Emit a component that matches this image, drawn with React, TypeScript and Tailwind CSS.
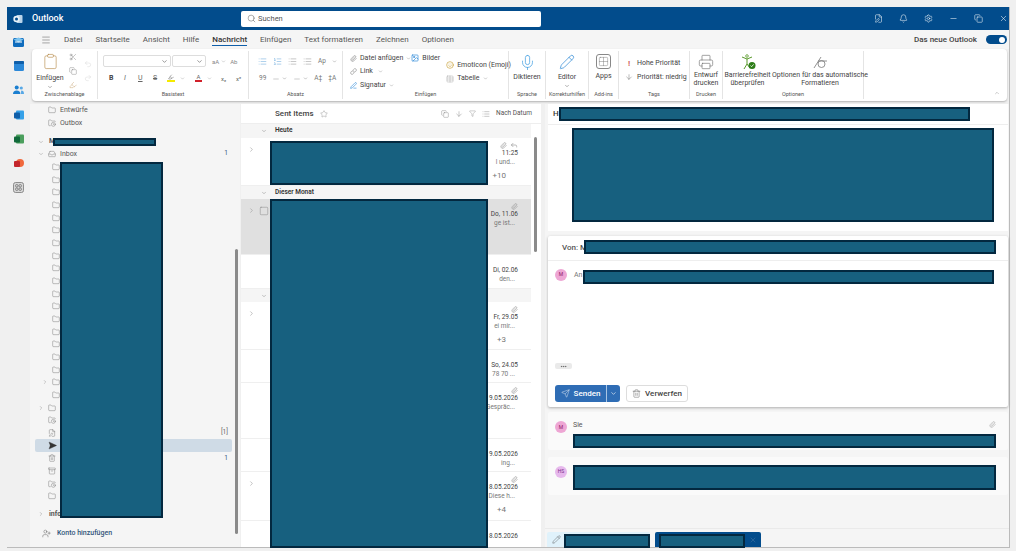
import {
  Archive,
  ArrowDown,
  Bell,
  ChevronDown,
  ChevronRight,
  ChevronUp,
  Clipboard,
  Copy,
  Ellipsis,
  FileEdit,
  Filter,
  Folder,
  FolderClock,
  Grid2x2,
  Highlighter,
  Image,
  Inbox,
  Link,
  List,
  ListOrdered,
  Menu,
  Mic,
  Minus,
  Paperclip,
  PenLine,
  Pencil,
  Printer,
  Redo2,
  Reply,
  Scissors,
  Search,
  Send,
  SendHorizontal,
  Settings,
  Smile,
  Square,
  Star,
  Table,
  Trash2,
  Undo2,
  UserPlus,
  X,
} from "lucide-react";
import type { ReactNode } from "react";

const tabs = ["Datei", "Startseite", "Ansicht", "Hilfe", "Nachricht", "Einfügen", "Text formatieren", "Zeichnen", "Optionen"];

function Redact({ x, y, w, h }: { x: number; y: number; w: number; h: number }) {
  // Schwaerzungen liegen ueber dem Inhalt, daher absolut
  return (
    <div
      className="absolute z-20 bg-[#17607f] border-2 border-[#03283f]"
      style={{ left: x, top: y, width: w, height: h }}
    />
  );
}

function Group({ label, w, children }: { label: string; w: number; children: ReactNode }) {
  return (
    <div className="flex flex-col shrink-0 border-r border-[#e4e4e4] h-[48px] my-auto" style={{ width: w }}>
      <div className="flex-1 min-h-0">{children}</div>
      <div className="h-[9px] leading-[9px] text-center text-[5.5px] text-[#555]">{label}</div>
    </div>
  );
}

const folderIcon = "ml-[3px] text-[#666] shrink-0";

function FolderRow({ sub, chevron, icon, active, count, label, bold }: { sub?: boolean; chevron?: boolean; icon?: ReactNode; active?: boolean; count?: string; label?: string; bold?: boolean }) {
  return (
    <div className={`relative flex items-center h-[12.68px] rounded-[2px] ${active ? "bg-[#cfdbe6]" : ""} ${sub ? "pl-[6px]" : "pl-[2px]"}`}>
      <span className="w-[8px] flex justify-center text-[#999]">{chevron && <ChevronRight size={6} />}</span>
      {icon}
      {label && <span className={`ml-[4px] whitespace-nowrap text-[7px] ${bold ? "font-bold text-[#555]" : "text-[#555]"}`}>{label}</span>}
      {count && <span className={`absolute right-[4px] text-[6.5px] ${count === "1" ? "text-[#33557a]" : "text-[#666]"}`}>{count}</span>}
    </div>
  );
}

type Mail = { h: number; date?: string; snip?: string; clip?: boolean; reply?: boolean; more?: string; selected?: boolean; arrow?: boolean };

function MailRow({ m }: { m: Mail }) {
  return (
    <div className={`relative shrink-0 mr-[10px] border-b border-[#efefef] ${m.selected ? "bg-[#e0e0e0]" : "bg-white"}`} style={{ height: m.h }}>
      {m.arrow && <ChevronRight size={7} className="absolute left-[7px] top-[8px] text-[#999]" />}
      {m.selected && <Square size={10} strokeWidth={1} className="absolute left-[18px] top-[7px] text-[#777]" />}
      <div className="ml-auto w-[44px] pr-[13px] pt-[3px] flex flex-col items-end text-[6.5px] leading-[9px] text-[#444]">
        <div className="h-[8px] flex items-center gap-[3px] text-[#999]">
          {m.clip && <Paperclip size={7} />}
          {m.reply && <Reply size={8} />}
        </div>
        <span className="whitespace-nowrap">{m.date}</span>
        <span className="whitespace-nowrap text-[#777] mr-[3px]">{m.snip}</span>
        {m.more && <span className="mt-[4px] mr-[12px] text-[8px] text-[#777]">{m.more}</span>}
      </div>
    </div>
  );
}

function GroupHead({ label, h }: { label?: string; h: number }) {
  return (
    <div className="shrink-0 flex items-center pl-[20px] mr-[10px] bg-[#f5f5f5] text-[6.5px] font-semibold text-[#333]" style={{ height: h }}>
      <ChevronDown size={6} className="text-[#888] mr-[8px]" />
      {label}
    </div>
  );
}

function AppIcon({ children }: { children: ReactNode }) {
  return <div className="h-[24.2px] flex items-center justify-center">{children}</div>;
}

export default function App() {
  return (
    <div className="relative w-[1016px] h-[551px] overflow-hidden bg-[#f0f0f0] pl-[7px] pr-[6px] pt-[7px] pb-[3px] font-['Roboto',sans-serif] text-[#333]">
      <div className="h-full flex flex-col border-r border-b border-[#bbb] bg-[#f0f0f0]">
        {/* TITELLEISTE */}
        <div className="relative shrink-0 h-[23px] bg-[#024c8c] text-white flex items-center">
          <svg width="10" height="10" viewBox="0 0 10 10" className="ml-[6px]">
            <rect x="3.5" y="1" width="6" height="8" rx="1" fill="#b9d4ea" />
            <circle cx="3.5" cy="5" r="3.2" fill="#e8f1f8" />
            <circle cx="3.5" cy="5" r="1.5" fill="#024c8c" />
          </svg>
          <span className="ml-[9px] w-[209px] text-[9px] font-medium">Outlook</span>
          <div className="w-[300px] h-[16px] bg-white rounded-[2px] flex items-center pl-[6px] text-[#555] text-[7.5px]">
            <Search size={9} strokeWidth={1.3} className="mr-[2px]" />
            Suchen
          </div>
          <div className="ml-auto flex items-center gap-[16px] pr-[1px]">
            <FileEdit size={9} strokeWidth={1.4} />
            <Bell size={9} strokeWidth={1.4} />
            <Settings size={9} strokeWidth={1.4} />
            <Minus size={9} strokeWidth={1.4} />
            <Copy size={9} strokeWidth={1.4} />
            <X size={9} strokeWidth={1.4} />
          </div>
        </div>

        <div className="flex-1 min-h-0 flex">
          {/* APP-LEISTE */}
          <div className="w-[23px] shrink-0 bg-[#f0f0f0]">
            <div>
              <AppIcon>
                <svg width="11" height="10" viewBox="0 0 11 10">
                  <rect y="1" width="11" height="9" rx="1.5" fill="#0f6cbd" />
                  <path d="M0.5 2.5 L5.5 5.5 L10.5 2.5 L5.5 0.5 Z" fill="#7cc4f0" />
                  <path d="M2 5 H9" stroke="#fff" strokeWidth="1" />
                </svg>
              </AppIcon>
              <AppIcon>
                <svg width="10" height="10" viewBox="0 0 10 10">
                  <rect width="10" height="10" rx="1.5" fill="#2b88d8" />
                  <rect width="10" height="3" rx="1" fill="#0f5ea8" />
                </svg>
              </AppIcon>
              <AppIcon>
                <svg width="11" height="10" viewBox="0 0 11 10">
                  <circle cx="3.7" cy="2.6" r="2" fill="#1b7fd0" />
                  <circle cx="8.3" cy="3" r="1.6" fill="#58a8e6" />
                  <path d="M0 9 Q0 5.5 3.7 5.5 Q7.4 5.5 7.4 9 Z" fill="#1b7fd0" />
                  <path d="M8 9 Q8 5.8 8.3 5.6 Q11 5.6 11 9 Z" fill="#58a8e6" />
                </svg>
              </AppIcon>
              <AppIcon>
                <svg width="10" height="10" viewBox="0 0 10 10">
                  <rect x="2" y="0.5" width="8" height="9" rx="1" fill="#35a0e8" />
                  <rect y="2.5" width="6" height="6" rx="1" fill="#0f5ea8" />
                </svg>
              </AppIcon>
              <AppIcon>
                <svg width="10" height="10" viewBox="0 0 10 10">
                  <rect x="2" y="0.5" width="8" height="9" rx="1" fill="#4a9e5c" />
                  <rect y="2.5" width="6" height="6" rx="1" fill="#10693a" />
                </svg>
              </AppIcon>
              <AppIcon>
                <svg width="10" height="10" viewBox="0 0 10 10">
                  <circle cx="6" cy="5" r="4" fill="#f0683c" />
                  <rect y="3" width="6" height="6" rx="1" fill="#c4262c" />
                </svg>
              </AppIcon>
              <AppIcon>
                <svg width="11" height="11" viewBox="0 0 11 11">
                  <rect x="0.5" y="0.5" width="10" height="10" rx="2" fill="#d8d8d8" stroke="#777" strokeWidth="0.8" />
                  <circle cx="3.8" cy="3.8" r="1.3" fill="none" stroke="#666" strokeWidth="0.7" />
                  <circle cx="7.2" cy="3.8" r="1.3" fill="none" stroke="#666" strokeWidth="0.7" />
                  <circle cx="3.8" cy="7.2" r="1.3" fill="none" stroke="#666" strokeWidth="0.7" />
                  <circle cx="7.2" cy="7.2" r="1.3" fill="none" stroke="#666" strokeWidth="0.7" />
                </svg>
              </AppIcon>
            </div>
          </div>

          <div className="flex-1 min-w-0 flex flex-col">
            {/* TABS */}
            <div className="shrink-0 h-[19px] flex items-center text-[8px] text-[#555] bg-[#f5f5f5]">
              <Menu size={10} strokeWidth={1.2} className="ml-[11px] mr-[13px] text-[#555]" />
              <div className="flex gap-[13px]">
                {tabs.map((t) =>
                  t === "Nachricht" ? (
                    <span key={t} className="font-medium text-[#333] border-b border-[#0f5ea8] leading-[11px]">
                      {t}
                    </span>
                  ) : (
                    <span key={t} className="leading-[11px]">
                      {t}
                    </span>
                  ),
                )}
              </div>
              <span className="ml-auto mr-[9px] font-medium text-[#444]">Das neue Outlook</span>
              <span className="relative w-[21px] h-[9px] mr-[2px] rounded-full bg-[#024c8c]">
                <span className="absolute right-[2px] top-[1.5px] w-[6px] h-[6px] rounded-full bg-white" />
              </span>
            </div>

            {/* RIBBON */}
            <div className="shrink-0 h-[52px] ml-[2px] mr-[2px] bg-white rounded-[4px] shadow-[0_1px_2px_rgba(0,0,0,0.25)] flex items-center text-[7px] text-[#444]">
              <Group label="Zwischenablage" w={66}>
                <div className="flex pl-[5px]">
                  <div className="w-[26px] flex flex-col items-center">
                    <Clipboard size={17} strokeWidth={0.9} className="text-[#b78a4a] mt-[2px]" />
                    <span className="mt-[3px]">Einfügen</span>
                    <ChevronDown size={6} className="text-[#666]" />
                  </div>
                  <div className="ml-[6px] flex flex-col gap-[6px] pt-[1.5px] items-center">
                    <Scissors size={8} strokeWidth={1.1} className="text-[#666]" />
                    <Copy size={8} strokeWidth={1.1} className="text-[#666]" />
                    <Highlighter size={8} strokeWidth={1.1} className="text-[#b78a4a]" />
                  </div>
                  <div className="ml-[7px] flex flex-col gap-[6px] pt-[8.5px] items-center text-[#ccc]">
                    <Undo2 size={8} strokeWidth={1.1} />
                    <Redo2 size={8} strokeWidth={1.1} />
                  </div>
                </div>
              </Group>

              <Group label="Basistext" w={151}>
                <div className="pl-[5px] pt-[4px]">
                  <div className="flex items-center gap-[1px]">
                    <div className="w-[68px] h-[12px] border border-[#ddd] rounded-[2px] flex items-center justify-end pr-[2px]">
                      <ChevronDown size={7} className="text-[#555]" />
                    </div>
                    <div className="w-[34px] h-[12px] border border-[#ddd] rounded-[2px] flex items-center justify-end pr-[2px]">
                      <ChevronDown size={7} className="text-[#555]" />
                    </div>
                    <span className="ml-[5px] text-[6px] text-[#888]">aA</span>
                    <ChevronDown size={5} className="ml-[1px] text-[#999]" />
                    <span className="ml-[3px] text-[6px] text-[#888]">Ab</span>
                  </div>
                  <div className="flex items-center mt-[6px] pl-[6px] text-[7px] text-[#666]">
                    <span className="w-[15px] font-bold text-[#444]">B</span>
                    <span className="w-[14px] italic">I</span>
                    <span className="w-[15px] underline">U</span>
                    <span className="w-[12px] line-through">S</span>
                    <span className="w-[12px] flex flex-col items-center">
                      <Highlighter size={6} />
                      <span className="w-[8px] h-[2px] bg-[#f5ea00]" />
                    </span>
                    <ChevronDown size={5} className="ml-[3px] mr-[9px] text-[#999]" />
                    <span className="w-[9px] flex flex-col items-center leading-[6px] text-[6px]">
                      A<span className="w-[7px] h-[2px] bg-[#d1202a]" />
                    </span>
                    <ChevronDown size={5} className="ml-[4px] mr-[9px] text-[#999]" />
                    <span className="w-[15px] text-[6px]">x₂</span>
                    <span className="text-[6px]">x²</span>
                  </div>
                </div>
              </Group>

              <Group label="Absatz" w={94}>
                <div className="pl-[9px] pt-[6px] text-[#777]">
                  <div className="flex items-center gap-[6px]">
                    <List size={9} strokeWidth={1.1} className="text-[#3a8fd0]" />
                    <ListOrdered size={9} strokeWidth={1.1} className="text-[#3a8fd0]" />
                    <List size={9} strokeWidth={1.1} />
                    <List size={9} strokeWidth={1.1} />
                    <span className="text-[6.5px]">Ap</span>
                    <ChevronDown size={5} />
                  </div>
                  <div className="flex items-center gap-[6px] mt-[7px] pl-[1px] text-[6.5px]">
                    <span>99</span>
                    <Minus size={8} strokeWidth={1.1} />
                    <ChevronDown size={5} className="-ml-[4px]" />
                    <Minus size={8} strokeWidth={1.1} />
                    <ChevronDown size={5} className="-ml-[4px]" />
                    <span>A‡</span>
                    <span>‡A</span>
                  </div>
                </div>
              </Group>

              <Group label="Einfügen" w={166}>
                <div className="flex pl-[7px] pt-[2px]">
                  <div className="w-[67px] flex flex-col gap-[3.5px]">
                    <span className="flex items-center gap-[3px] h-[10px] whitespace-nowrap">
                      <Paperclip size={7} className="text-[#888]" /> Datei anfügen <ChevronDown size={5} className="text-[#888]" />
                    </span>
                    <span className="flex items-center gap-[3px] h-[10px]">
                      <Link size={7} className="text-[#888]" /> Link <ChevronDown size={5} className="ml-[2px] text-[#888]" />
                    </span>
                    <span className="flex items-center gap-[3px] h-[10px]">
                      <PenLine size={7} className="text-[#2b88d8]" /> Signatur <ChevronDown size={5} className="text-[#888]" />
                    </span>
                  </div>
                  <span className="flex items-center gap-[3px] h-[10px]">
                    <Image size={8} className="text-[#2b88d8]" /> Bilder
                  </span>
                  <div className="ml-[6px] flex flex-col gap-[3.5px] pt-[7px]">
                    <span className="flex items-center gap-[3px] h-[10px] whitespace-nowrap">
                      <Smile size={8} className="text-[#c9a13b]" /> Emoticon (Emoji)
                    </span>
                    <span className="flex items-center gap-[3px] h-[10px]">
                      <Table size={8} strokeWidth={1} className="text-[#888]" /> Tabelle <ChevronDown size={5} className="text-[#888]" />
                    </span>
                  </div>
                </div>
              </Group>

              <Group label="Sprache" w={37}>
                <div className="flex flex-col items-center pt-[3px]">
                  <Mic size={17} strokeWidth={1} className="text-[#3a9ae0]" />
                  <span className="mt-[1px]">Diktieren</span>
                </div>
              </Group>

              <Group label="Korrekturhilfen" w={43}>
                <div className="flex flex-col items-center pt-[3px]">
                  <Pencil size={16} strokeWidth={1} className="text-[#1b7fd0]" />
                  <span className="mt-[2px]">Editor</span>
                  <ChevronDown size={6} className="text-[#666]" />
                </div>
              </Group>

              <Group label="Add-ins" w={30}>
                <div className="flex flex-col items-center pt-[3px]">
                  <div className="w-[15px] h-[15px] border border-[#888] rounded-[3px] flex items-center justify-center">
                    <Grid2x2 size={11} strokeWidth={1} className="text-[#777]" />
                  </div>
                  <span className="mt-[2px]">Apps</span>
                </div>
              </Group>

              <Group label="Tags" w={71}>
                <div className="pl-[6px] pt-[8px] flex flex-col gap-[4.5px]">
                  <span className="flex items-center gap-[4px] whitespace-nowrap h-[9px]">
                    <span className="text-[#d1605c] font-bold text-[8px] w-[8px] text-center">!</span> Hohe Priorität
                  </span>
                  <span className="flex items-center gap-[4px] whitespace-nowrap h-[9px]">
                    <ArrowDown size={8} strokeWidth={1.1} /> Priorität: niedrig
                  </span>
                </div>
              </Group>

              <Group label="Drucken" w={33}>
                <div className="flex flex-col items-center pt-[3px] leading-[8px] text-center">
                  <Printer size={16} strokeWidth={0.9} className="text-[#666]" />
                  <span className="mt-[1px]">Entwurf drucken</span>
                </div>
              </Group>

              <Group label="Optionen" w={141}>
                <div className="flex pt-[3px] leading-[8px] text-center">
                  <div className="w-[49px] flex flex-col items-center shrink-0">
                    <svg width="16" height="16" viewBox="0 0 16 16">
                      <path d="M2 3 L7 5 L12 3 M7 5 V10 L4 15 M7 10 L10 14" fill="none" stroke="#5a9a2c" strokeWidth="1" />
                      <circle cx="7" cy="2" r="1.3" fill="none" stroke="#5a9a2c" strokeWidth="0.8" />
                      <circle cx="12" cy="11.5" r="3.5" fill="#2e7d18" />
                      <path d="M10.5 11.5 L11.6 12.7 L13.6 10.4" fill="none" stroke="#fff" strokeWidth="0.8" />
                    </svg>
                    <span className="mt-[1px] whitespace-nowrap">Barrierefreiheit</span>
                    <span>überprüfen</span>
                  </div>
                  <div className="flex-1 flex flex-col items-center">
                    <svg width="16" height="16" viewBox="0 0 16 16">
                      <path d="M2 14 L9 3" fill="none" stroke="#777" strokeWidth="0.8" />
                      <circle cx="9.5" cy="10" r="3.5" fill="none" stroke="#777" strokeWidth="0.8" />
                      <path d="M6 7 H15" stroke="#777" strokeWidth="0.8" />
                    </svg>
                    <span className="mt-[1px] whitespace-nowrap">Optionen für das automatische</span>
                    <span>Formatieren</span>
                  </div>
                </div>
              </Group>

              <div className="flex-1 h-full relative">
                <ChevronUp size={6} className="absolute right-[7px] bottom-[5px] text-[#999]" />
              </div>
            </div>

            <div className="flex-1 min-h-0 flex pt-[3px]">
              {/* ORDNERBEREICH */}
              <div className="relative w-[210px] shrink-0 pr-[8px] pl-[5px] pt-[0px] bg-[#f5f5f5]">
                <FolderRow icon={<Folder size={8} strokeWidth={1.2} className={folderIcon} />} label="Entwürfe" />
                <FolderRow icon={<FolderClock size={8} strokeWidth={1.2} className={folderIcon} />} label="Outbox" />
                <div className="h-[6px]" />
                <div className="relative flex items-center h-[12.68px] pl-[2px]">
                  <span className="w-[8px] flex justify-center text-[#999]">
                    <ChevronDown size={6} />
                  </span>
                  <span className="ml-[4px] text-[7px] font-bold text-[#555]">M</span>
                </div>
                <div className="relative flex items-center h-[12.68px] pl-[2px]">
                  <span className="w-[8px] flex justify-center text-[#999]">
                    <ChevronDown size={6} />
                  </span>
                  <Inbox size={8} strokeWidth={1.2} className={folderIcon} />
                  <span className="ml-[4px] text-[7px] text-[#555]">Inbox</span>
                  <span className="absolute right-[4px] text-[6.5px] text-[#33557a]">1</span>
                </div>
                {Array.from({ length: 19 }).map((_, i) => (
                  <FolderRow key={i} sub chevron={i === 17} icon={<Folder size={8} strokeWidth={1.2} className={folderIcon} />} />
                ))}
                <FolderRow chevron icon={<Folder size={8} strokeWidth={1.2} className={folderIcon} />} />
                <FolderRow icon={<FolderClock size={8} strokeWidth={1.2} className={folderIcon} />} />
                <FolderRow icon={<FileEdit size={8} strokeWidth={1.2} className={folderIcon} />} count="[1]" />
                <FolderRow active icon={<SendHorizontal size={9} fill="#333" strokeWidth={1} className="ml-[3px] text-[#333]" />} />
                <FolderRow icon={<Trash2 size={8} strokeWidth={1.2} className={folderIcon} />} count="1" />
                <FolderRow icon={<Archive size={8} strokeWidth={1.2} className={folderIcon} />} />
                <FolderRow icon={<FolderClock size={8} strokeWidth={1.2} className={folderIcon} />} />
                <FolderRow icon={<Folder size={8} strokeWidth={1.2} className={folderIcon} />} />
                <div className="h-[5px]" />
                <FolderRow chevron label="info" bold />
                <div className="mt-[6px] h-[14px] pl-[7px] flex items-center text-[7px] font-medium text-[#33557a]">
                  <UserPlus size={9} strokeWidth={1.2} className="text-[#555] mr-[6px]" />
                  Konto hinzufügen
                </div>
                {/* Scrollbalken */}
                <div className="absolute right-[2px] top-[145px] bottom-[13px] w-[3px] bg-[#8a8a8a] rounded-full" />
              </div>

              {/* NACHRICHTENLISTE */}
              <div className="relative w-[300px] shrink-0 ml-[1px] flex flex-col bg-white overflow-hidden">
                <div className="shrink-0 h-[20px] flex items-center pl-[34px] pr-[9px] text-[#444] border-b border-[#eee]">
                  <span className="text-[8px] font-medium">Sent Items</span>
                  <Star size={8} strokeWidth={1.1} className="ml-[6px] text-[#777]" />
                  <div className="ml-auto flex items-center gap-[6px] text-[#777]">
                    <Copy size={8} strokeWidth={1.2} />
                    <ArrowDown size={8} strokeWidth={1.2} />
                    <Filter size={7} strokeWidth={1.2} />
                    <List size={8} strokeWidth={1.2} />
                    <span className="text-[6.5px] text-[#555]">Nach Datum</span>
                  </div>
                </div>
                <div className="flex-1 min-h-0 flex flex-col overflow-hidden">
                  <GroupHead label="Heute" h={14} />
                  <MailRow m={{ h: 48, date: "11:25", snip: "l und...", clip: true, reply: true, more: "+10", arrow: true }} />
                  <GroupHead label="Dieser Monat" h={13} />
                  <MailRow m={{ h: 56, date: "Do, 11.06", snip: "ge ist...", clip: true, selected: true, arrow: true }} />
                  <MailRow m={{ h: 34, date: "Di, 02.06", snip: "den..." }} />
                  <GroupHead h={13} />
                  <MailRow m={{ h: 48, date: "Fr, 29.05", snip: "ei mir...", clip: true, more: "+3", arrow: true }} />
                  <MailRow m={{ h: 33, date: "So, 24.05", snip: "78 70 ..." }} />
                  <MailRow m={{ h: 56, date: "19.05.2026", snip: "Gespräc...", clip: true }} />
                  <MailRow m={{ h: 33, date: "19.05.2026", snip: "ing..." }} />
                  <MailRow m={{ h: 49, date: "18.05.2026", snip: "Diese h...", clip: true, more: "+4", arrow: true }} />
                  <MailRow m={{ h: 30, date: "18.05.2026" }} />
                </div>
                <div className="absolute right-[4px] top-[33px] h-[115px] w-[3px] bg-[#8a8a8a] rounded-full" />
              </div>

              {/* LESEBEREICH */}
              <div className="flex-1 min-w-0 ml-[4px] flex flex-col bg-[#f5f5f5]">
                <div className="flex-1 min-h-0 pl-[3px] pr-[1px]">
                  <div className="h-[20px] bg-white flex items-center pl-[5px] text-[8px] font-medium">H</div>
                  <div className="h-[107px] bg-white border-t border-[#eee]" />
                  <div className="mt-[5px] h-[171px] bg-white rounded-[2px] shadow-[0_1px_3px_rgba(0,0,0,0.3)] flex flex-col">
                    <div className="shrink-0 h-[25px] flex items-center pl-[14px] text-[8px] font-medium text-[#555] border-b border-[#eee]">Von: M</div>
                    <div className="flex-1 flex flex-col px-[7px] pt-[8px]">
                      <div className="flex items-center gap-[7px] text-[7px] text-[#777]">
                        <span className="w-[12px] h-[12px] rounded-full bg-[#eea6d4] flex items-center justify-center text-[5px] text-[#8a1a66]">M</span>
                        An
                      </div>
                      <div className="mt-[82px] w-[17px] h-[6px] rounded-[2px] bg-[#eaeaea] flex items-center justify-center">
                        <Ellipsis size={7} className="text-[#555]" />
                      </div>
                      <div className="mt-[16px] flex items-center">
                        <div className="h-[17px] w-[65px] rounded-[3px] bg-[#2f6db5] text-white flex items-center text-[8px] font-medium">
                          <span className="flex-1 h-full flex items-center justify-center gap-[4px] border-r border-[#a9c5e4]">
                            <Send size={9} strokeWidth={1.1} />
                            Senden
                          </span>
                          <span className="w-[13px] flex justify-center">
                            <ChevronDown size={7} />
                          </span>
                        </div>
                        <div className="ml-[6px] h-[17px] w-[62px] rounded-[3px] border border-[#ddd] bg-white flex items-center justify-center gap-[4px] text-[8px] font-medium text-[#444]">
                          <Trash2 size={9} strokeWidth={1.1} />
                          Verwerfen
                        </div>
                      </div>
                    </div>
                  </div>
                  <div className="relative mt-[5px] h-[38px] bg-[#fafafa] rounded-[2px] pl-[25px] pt-[9px] text-[7px] leading-[9px] text-[#555]">
                    <span className="absolute left-[7px] top-[9px] w-[12px] h-[12px] rounded-full bg-[#eea6d4] flex items-center justify-center text-[5px] text-[#8a1a66]">M</span>
                    Sie
                    <Paperclip size={7} className="absolute right-[12px] top-[9px] text-[#aaa]" />
                  </div>
                  <div className="relative mt-[7px] h-[38px] bg-[#fafafa] rounded-[2px]">
                    <span className="absolute left-[7px] top-[9px] w-[12px] h-[12px] rounded-full bg-[#e6b8ec] flex items-center justify-center text-[5px] text-[#7a2f8a]">HS</span>
                  </div>
                </div>
                {/* ENTWURFS-TABS */}
                <div className="shrink-0 h-[19px] border-t border-[#eaeaea] flex items-end pl-[2px] gap-[5px]">
                  <div className="w-[103px] h-[15px] bg-[#e0f2fb] rounded-t-[2px] pl-[5px] flex items-center">
                    <Pencil size={9} strokeWidth={1.1} className="text-[#444]" />
                  </div>
                  <div className="w-[106px] h-[15px] bg-[#024c8c] rounded-t-[2px] flex items-center justify-end pr-[4px]">
                    <X size={8} strokeWidth={1} className="text-[#6d8fb3]" />
                  </div>
                </div>
              </div>
            </div>
          </div>
        </div>
      </div>

      <Redact x={53} y={138} w={103} h={8} />
      <Redact x={60} y={162} w={103} h={356} />
      <Redact x={270} y={141} w={218} h={44} />
      <Redact x={270} y={199} w={218} h={349} />
      <Redact x={559} y={107} w={411} h={14} />
      <Redact x={572} y={128} w={422} h={94} />
      <Redact x={584} y={240} w={412} h={14} />
      <Redact x={583} y={270} w={411} h={14} />
      <Redact x={573} y={434} w={423} h={14} />
      <Redact x={573} y={465} w={423} h={25} />
      <Redact x={564} y={534} w={86} h={14} />
      <Redact x={659} y={534} w={86} h={14} />
    </div>
  );
}
